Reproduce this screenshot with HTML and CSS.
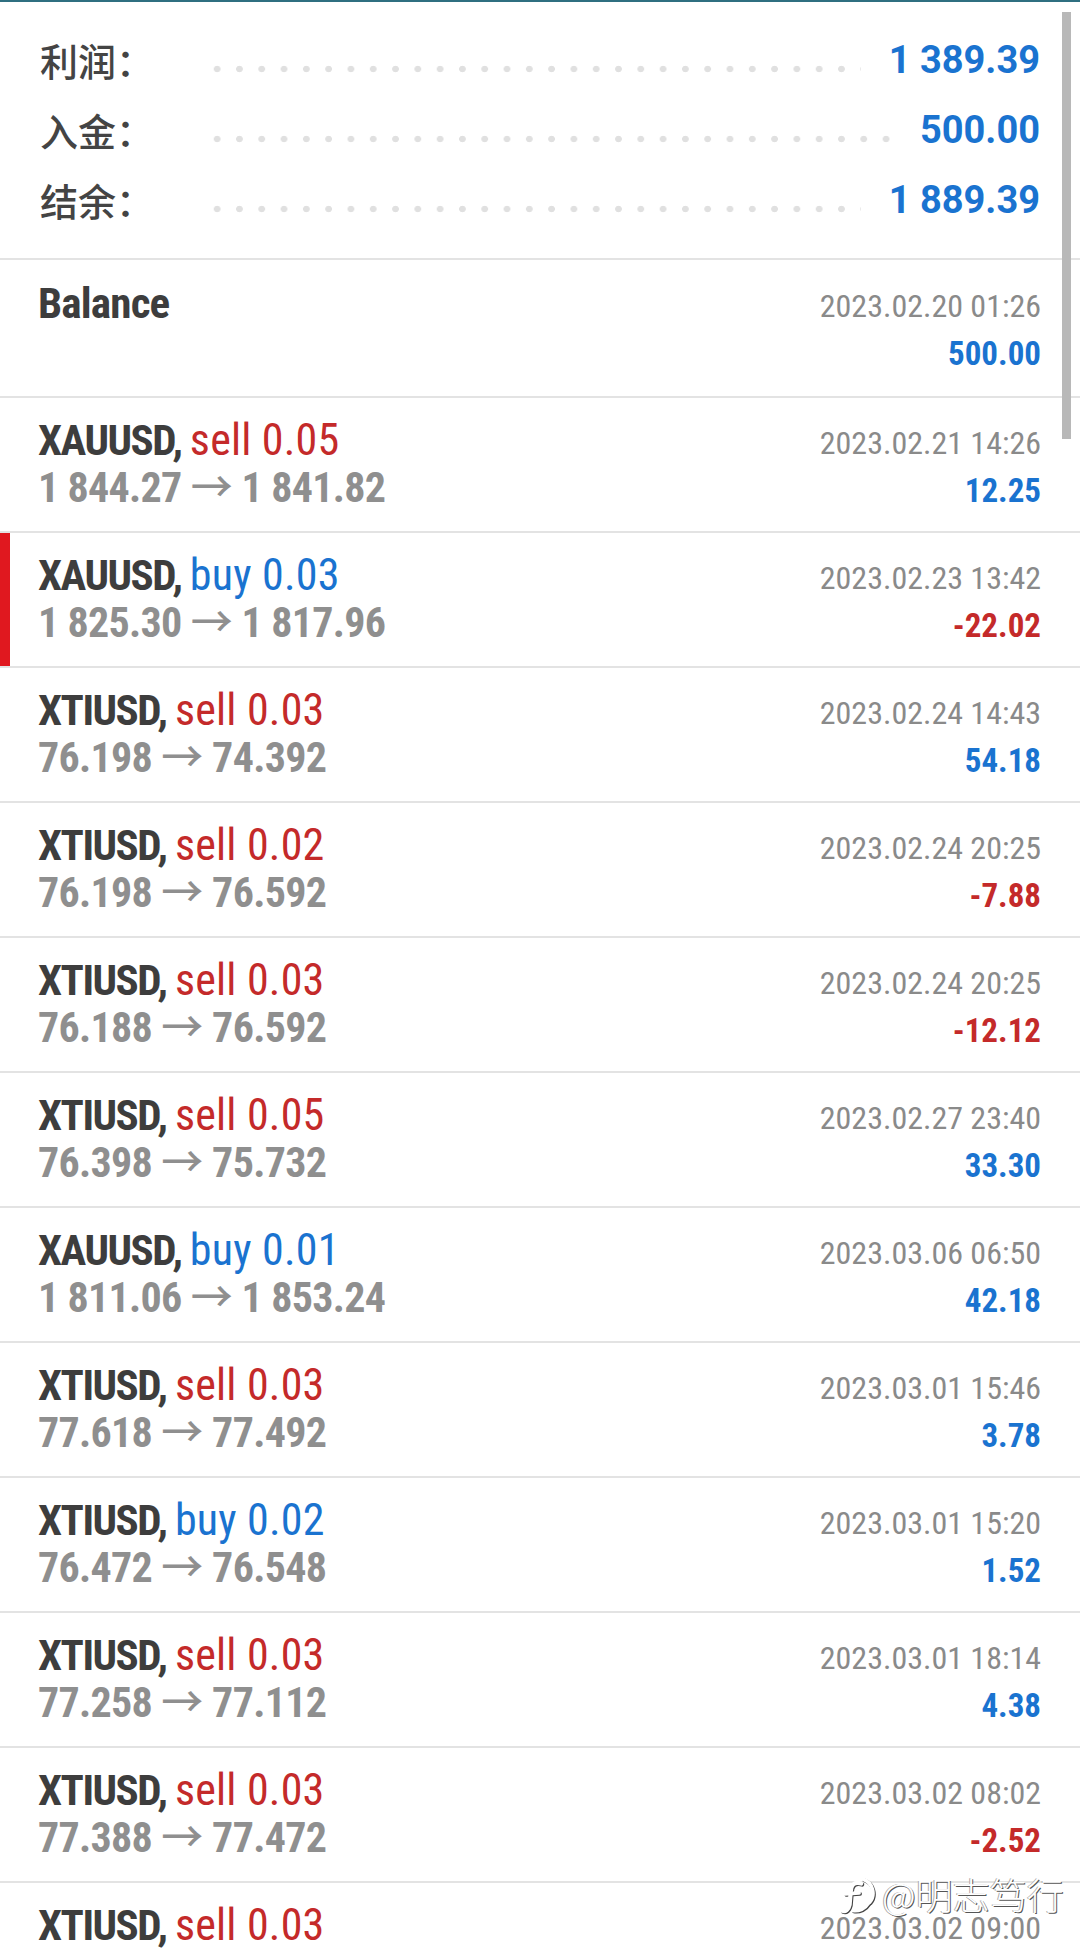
FILE: index.html
```html
<!DOCTYPE html>
<html lang="zh-CN">
<head>
  <meta charset="UTF-8">
  <meta name="viewport" content="width=device-width, initial-scale=1.0">
  <title>历史</title>
  <link rel="stylesheet" href="styles.css">
</head>
<body>
  <div class="page">
    <!-- 汇总 -->
    <div class="summary">
      <div class="sum-row">
        <span class="sum-label">利润：</span>
        <span class="dots"></span>
        <span class="sum-value">1 389.39</span>
      </div>
      <div class="sum-row">
        <span class="sum-label">入金：</span>
        <span class="dots"></span>
        <span class="sum-value">500.00</span>
      </div>
      <div class="sum-row">
        <span class="sum-label">结余：</span>
        <span class="dots"></span>
        <span class="sum-value">1 889.39</span>
      </div>
    </div>

    <!-- 交易列表 -->
    <ul class="deals">
      <li class="deal deal-balance">
        <div class="deal-left">
          <div class="deal-symbol">Balance</div>
        </div>
        <div class="deal-right">
          <div class="deal-time">2023.02.20 01:26</div>
          <div class="deal-profit">500.00</div>
        </div>
      </li>
      <li class="deal">
        <div class="deal-left">
          <div class="deal-symbol">XAUUSD, <span class="sell">sell 0.05</span></div>
          <div class="deal-price">1 844.27 <span class="arrow">→</span> 1 841.82</div>
        </div>
        <div class="deal-right">
          <div class="deal-time">2023.02.21 14:26</div>
          <div class="deal-profit">12.25</div>
        </div>
      </li>
      <li class="deal marked">
        <div class="deal-left">
          <div class="deal-symbol">XAUUSD, <span class="buy">buy 0.03</span></div>
          <div class="deal-price">1 825.30 <span class="arrow">→</span> 1 817.96</div>
        </div>
        <div class="deal-right">
          <div class="deal-time">2023.02.23 13:42</div>
          <div class="deal-profit loss">-22.02</div>
        </div>
      </li>
      <li class="deal">
        <div class="deal-left">
          <div class="deal-symbol">XTIUSD, <span class="sell">sell 0.03</span></div>
          <div class="deal-price">76.198 <span class="arrow">→</span> 74.392</div>
        </div>
        <div class="deal-right">
          <div class="deal-time">2023.02.24 14:43</div>
          <div class="deal-profit">54.18</div>
        </div>
      </li>
      <li class="deal">
        <div class="deal-left">
          <div class="deal-symbol">XTIUSD, <span class="sell">sell 0.02</span></div>
          <div class="deal-price">76.198 <span class="arrow">→</span> 76.592</div>
        </div>
        <div class="deal-right">
          <div class="deal-time">2023.02.24 20:25</div>
          <div class="deal-profit loss">-7.88</div>
        </div>
      </li>
      <li class="deal">
        <div class="deal-left">
          <div class="deal-symbol">XTIUSD, <span class="sell">sell 0.03</span></div>
          <div class="deal-price">76.188 <span class="arrow">→</span> 76.592</div>
        </div>
        <div class="deal-right">
          <div class="deal-time">2023.02.24 20:25</div>
          <div class="deal-profit loss">-12.12</div>
        </div>
      </li>
      <li class="deal">
        <div class="deal-left">
          <div class="deal-symbol">XTIUSD, <span class="sell">sell 0.05</span></div>
          <div class="deal-price">76.398 <span class="arrow">→</span> 75.732</div>
        </div>
        <div class="deal-right">
          <div class="deal-time">2023.02.27 23:40</div>
          <div class="deal-profit">33.30</div>
        </div>
      </li>
      <li class="deal">
        <div class="deal-left">
          <div class="deal-symbol">XAUUSD, <span class="buy">buy 0.01</span></div>
          <div class="deal-price">1 811.06 <span class="arrow">→</span> 1 853.24</div>
        </div>
        <div class="deal-right">
          <div class="deal-time">2023.03.06 06:50</div>
          <div class="deal-profit">42.18</div>
        </div>
      </li>
      <li class="deal">
        <div class="deal-left">
          <div class="deal-symbol">XTIUSD, <span class="sell">sell 0.03</span></div>
          <div class="deal-price">77.618 <span class="arrow">→</span> 77.492</div>
        </div>
        <div class="deal-right">
          <div class="deal-time">2023.03.01 15:46</div>
          <div class="deal-profit">3.78</div>
        </div>
      </li>
      <li class="deal">
        <div class="deal-left">
          <div class="deal-symbol">XTIUSD, <span class="buy">buy 0.02</span></div>
          <div class="deal-price">76.472 <span class="arrow">→</span> 76.548</div>
        </div>
        <div class="deal-right">
          <div class="deal-time">2023.03.01 15:20</div>
          <div class="deal-profit">1.52</div>
        </div>
      </li>
      <li class="deal">
        <div class="deal-left">
          <div class="deal-symbol">XTIUSD, <span class="sell">sell 0.03</span></div>
          <div class="deal-price">77.258 <span class="arrow">→</span> 77.112</div>
        </div>
        <div class="deal-right">
          <div class="deal-time">2023.03.01 18:14</div>
          <div class="deal-profit">4.38</div>
        </div>
      </li>
      <li class="deal">
        <div class="deal-left">
          <div class="deal-symbol">XTIUSD, <span class="sell">sell 0.03</span></div>
          <div class="deal-price">77.388 <span class="arrow">→</span> 77.472</div>
        </div>
        <div class="deal-right">
          <div class="deal-time">2023.03.02 08:02</div>
          <div class="deal-profit loss">-2.52</div>
        </div>
      </li>
      <li class="deal">
        <div class="deal-left">
          <div class="deal-symbol">XTIUSD, <span class="sell">sell 0.03</span></div>
          <div class="deal-price">&nbsp;</div>
        </div>
        <div class="deal-right">
          <div class="deal-time">2023.03.02 09:00</div>
          <div class="deal-profit">&nbsp;</div>
        </div>
      </li>
    </ul>

    <!-- 滚动条 -->
    <div class="scrollbar"></div>

    <!-- 水印 -->
    <div class="watermark">
      <svg class="wm-logo" width="38" height="42" viewBox="0 0 36 40">
        <path d="M24 6 A14 14 0 0 1 30 28" fill="none" stroke="#fff" stroke-width="3.5" stroke-linecap="round"/>
        <path d="M22 10 C15 8 12 12 12 18 L11 30 C10 35 7 37 4 36" fill="none" stroke="#fff" stroke-width="4" stroke-linecap="round"/>
        <path d="M7 20 L20 19" fill="none" stroke="#fff" stroke-width="3.5" stroke-linecap="round"/>
        <path d="M14 36 C20 37 26 34 29 29" fill="none" stroke="#fff" stroke-width="3" stroke-linecap="round"/>
      </svg>
      <span class="wm-text">@明志笃行</span>
    </div>
  </div>
</body>
</html>
```

FILE: styles.css
```css
/* 清除默认样式 */
* {
  margin: 0;
  padding: 0;
  box-sizing: border-box;
}
ul,ol {
  list-style: none;
}
body {
  background-color: #fff;
  font-family: Roboto, "Noto Sans CJK SC", sans-serif;
}
.page {
  position: relative;
  width: 1080px;
  height: 1957px;
  overflow: hidden;
  background-color: #fff;
}
/* 汇总 */
.summary {
  padding: 23px 40px 23px 40px;
  border-top: 2px solid #2f6f80;
  border-bottom: 2px solid #e3e3e3;
}
.sum-row {
  display: flex;
  align-items: center;
  height: 70px;
}
.sum-label {
  width: 166px;
  font: 500 38px/70px "Noto Sans CJK SC", sans-serif;
  color: #444;
}
.dots {
  flex: 1;
  align-self: stretch;
  margin-right: 28px;
  background-image: radial-gradient(circle, #e0e0e0 3px, transparent 3.6px);
  background-size: 22.3px 8px;
  background-position: 0 40px;
  background-repeat: repeat-x;
}
.sum-value {
  font: bold 38px/70px Roboto, sans-serif;
  color: #1a73d0;
}
/* 交易列表 */
.deal {
  position: relative;
  display: flex;
  justify-content: space-between;
  padding: 18px 39px 19px 38px;
  border-bottom: 2px solid #e3e3e3;
  font-family: "Roboto Condensed", Roboto, sans-serif;
  font-stretch: condensed;
}
.deal-balance {
  padding-top: 19px;
  padding-bottom: 21px;
}
.deal.marked::before {
  content: "";
  position: absolute;
  left: 0;
  top: 0;
  bottom: 0;
  width: 10px;
  background-color: #e0181f;
}
.deal-symbol {
  font-size: 43px;
  line-height: 48px;
  font-weight: bold;
  letter-spacing: -1.5px;
  color: #3d3d3d;
}
.deal-balance .deal-symbol {
  letter-spacing: -0.8px;
}
.deal-symbol .sell,
.deal-symbol .buy {
  font-size: 44px;
  font-weight: normal;
  letter-spacing: 0.2px;
}
.sell {
  color: #c42a2a;
}
.buy {
  color: #1a73d0;
}
.deal-price {
  font-size: 42px;
  line-height: 48px;
  font-weight: bold;
  letter-spacing: -0.7px;
  color: #8f8f8f;
}
/* 箭头用中文字体，负外边距避免撑高行 */
.deal-price .arrow {
  display: inline-block;
  margin: -6px 0;
  font-family: "Noto Sans CJK SC", sans-serif;
  font-weight: 500;
  font-size: 42px;
  line-height: 48px;
  letter-spacing: 0;
}
.deal-right {
  text-align: right;
}
.deal-time {
  font-size: 32px;
  line-height: 54px;
  color: #8a8a8a;
}
.deal-profit {
  font-size: 33px;
  line-height: 42px;
  font-weight: bold;
  color: #1a73d0;
}
.deal-profit.loss {
  color: #c42a2a;
}
/* 滚动条 */
.scrollbar {
  position: absolute;
  left: 1062px;
  top: 12px;
  width: 9px;
  height: 427px;
  background-color: #b8b8b8;
}
/* 水印 */
.watermark {
  position: absolute;
  left: 838px;
  top: 1873px;
  display: flex;
  align-items: center;
  gap: 6px;
}
.wm-logo {
  filter: drop-shadow(1px 1px 0 #444);
}
.wm-text {
  font: 300 37px/42px "Noto Sans CJK SC", sans-serif;
  color: #fff;
  text-shadow: 1px 1px 0 #555, -1px 0 0 #aaa;
}
```
